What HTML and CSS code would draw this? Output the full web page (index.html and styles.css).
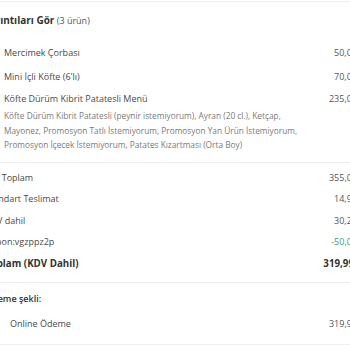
FILE: index.html
```html
<!DOCTYPE html>
<html lang="tr">
<head>
<meta charset="utf-8">
<link rel="stylesheet" href="styles.css">
</head>
<body>
<div class="page">
  <div class="header"><span class="title">Ayrıntıları Gör</span> <span class="count">(3 ürün)</span></div>
  <div class="items">
    <div class="row item"><span>Mercimek Çorbası</span><span class="val">50,00</span></div>
    <div class="row item"><span>Mini İçli Köfte (6'lı)</span><span class="val">70,00</span></div>
    <div class="item-block">
      <div class="row item title-row"><span>Köfte Dürüm Kibrit Patatesli Menü</span><span class="val">235,00</span></div>
      <div class="desc">Köfte Dürüm Kibrit Patatesli (peynir istemiyorum), Ayran (20 cl.), Ketçap,<br>Mayonez, Promosyon Tatlı İstemiyorum, Promosyon Yan Ürün İstemiyorum,<br>Promosyon İçecek İstemiyorum, Patates Kızartması (Orta Boy)</div>
    </div>
  </div>
  <div class="summary">
    <div class="row srow"><span>Ara Toplam</span><span class="val">355,00</span></div>
    <div class="row srow"><span>Standart Teslimat</span><span class="val">14,99</span></div>
    <div class="row srow"><span>KDV dahil</span><span class="val">30,25</span></div>
    <div class="row srow"><span>Kupon:vgzppz2p</span><span class="val green">-50,00</span></div>
    <div class="row srow total"><span>Toplam (KDV Dahil)</span><span class="val">319,99</span></div>
  </div>
  <div class="payment">
    <div class="pay-title">Ödeme şekli:</div>
    <div class="row prow"><span>Online Ödeme</span><span class="val">319,99</span></div>
  </div>
</div>
</body>
</html>
```
FILE: styles.css
```css
html, body {
  margin: 0;
  padding: 0;
  background: #fff;
  overflow: hidden;
}
body {
  font-family: "Open Sans", "Liberation Sans", sans-serif;
  color: #4a4a4a;
  font-size: 9px;
}
.page {
  margin-left: -15px;
  width: 372px;
  border-top: 1px solid #f0f0f0;
  margin-top: 1px;
}
.header {
  height: 39px;
  line-height: 36px;
  white-space: nowrap;
  margin-left: -2px;
}
.title {
  font-weight: 700;
  font-size: 10px;
  color: #333;
}
.count {
  font-size: 9px;
  color: #555;
}
.row {
  display: flex;
  justify-content: space-between;
  white-space: nowrap;
}
.val {
  color: #555;
}
.items {
  padding-left: 19px;
  padding-bottom: 9px;
  border-bottom: 1px solid #f0f0f0;
}
.item {
  line-height: 24px;
}
.title-row {
  line-height: 20px;
}
.desc {
  font-size: 8.3px;
  line-height: 14.5px;
  color: #7a7a7a;
  white-space: nowrap;
}
.summary {
  padding-top: 4px;
  padding-bottom: 8px;
  border-bottom: 1px solid #f0f0f0;
}
.srow {
  line-height: 21.5px;
}
.green {
  color: #3a9a6e;
}
.total {
  font-weight: 700;
  font-size: 9.75px;
  color: #333;
}
.total .val {
  color: #333;
  margin-right: 3px;
}
.payment {
  padding-top: 6px;
  height: 55px;
  border-bottom: 1px solid #f0f0f0;
}
.pay-title {
  font-weight: 600;
  line-height: 20px;
  color: #333;
}
.prow {
  padding-left: 25px;
  line-height: 30px;
}
```
